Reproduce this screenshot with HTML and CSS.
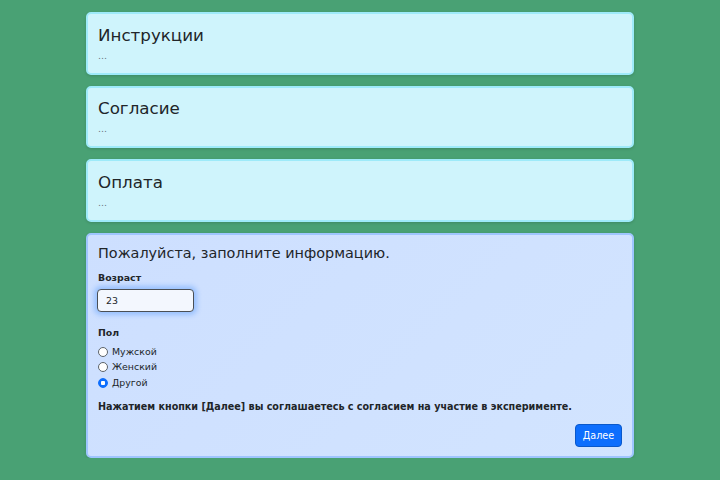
FILE: index.html
```html
<!DOCTYPE html>
<html lang="ru">
<head>
<meta charset="utf-8">
<title>Эксперимент</title>
<link rel="stylesheet" href="styles.css">
</head>
<body>
<main class="page">
  <section class="card card-info">
    <h2 class="card-title">Инструкции</h2>
    <p class="card-more">...</p>
  </section>
  <section class="card card-info">
    <h2 class="card-title">Согласие</h2>
    <p class="card-more">...</p>
  </section>
  <section class="card card-info">
    <h2 class="card-title">Оплата</h2>
    <p class="card-more">...</p>
  </section>
  <section class="card card-form">
    <h2 class="form-title">Пожалуйста, заполните информацию.</h2>
    <div class="field">
      <label class="field-label" for="age">Возраст</label>
      <input class="text-input" id="age" type="text" value="23">
    </div>
    <div class="field field-radios">
      <div class="field-label">Пол</div>
      <label class="radio-row"><input class="radio" type="radio" name="sex"> Мужской</label>
      <label class="radio-row"><input class="radio" type="radio" name="sex"> Женский</label>
      <label class="radio-row"><input class="radio" type="radio" name="sex" checked> Другой</label>
    </div>
    <p class="notice">Нажатием кнопки [Далее] вы соглашаетесь с согласием на участие в эксперименте.</p>
    <div class="actions">
      <button class="btn-primary" type="button">Далее</button>
    </div>
  </section>
</main>
</body>
</html>
```
FILE: styles.css
```css
* { box-sizing: border-box; }
html, body {
  margin: 0;
  padding: 0;
  background: #49a174;
  font-family: "DejaVu Sans", "Noto Sans", sans-serif;
  color: #212529;
}
.page {
  width: 548px;
  margin: 0 auto;
  padding-top: 12px;
  display: flex;
  flex-direction: column;
  gap: 11px;
}
.card {
  border: 2px solid #9eeaf9;
  border-radius: 5px;
  padding: 9.5px 10px 10px;
  box-shadow: 0 1px 3px rgba(0,0,0,0.15);
}
.card-info { background: #cff4fc; height: 62.5px; }
.card-title {
  margin: 0;
  font-size: 16.7px;
  font-weight: normal;
  line-height: 22px;
}
.card-more {
  margin: 2px 0 0;
  font-size: 9.5px;
  line-height: 16px;
  color: #6c757d;
}
.card-form {
  background: linear-gradient(135deg, #cddfff, #d2e4ff);
  border-color: #9ec5fe;
  padding: 9px 10px 9px;
}
.form-title {
  margin: 0 0 9.5px;
  font-size: 14.4px;
  font-weight: normal;
  line-height: 18px;
}
.field { display: flex; flex-direction: column; align-items: flex-start; margin-bottom: 14.5px; }
.field-radios { margin-bottom: 9.75px; }
.field-label {
  font-size: 9.4px;
  font-weight: bold;
  line-height: 13px;
  margin-bottom: 4.5px;
}
.field-radios .field-label { margin-bottom: 4.75px; }
.text-input {
  width: 97px;
  height: 23px;
  margin-left: -1px;
  border: 1px solid #4a4f55;
  border-radius: 4px;
  background: #f3f7fe;
  font-family: inherit;
  font-size: 9.4px;
  padding: 0 8px;
  color: #212529;
  box-shadow: 0 0 5px 3px rgba(13,110,253,0.28);
  outline: none;
}
.radio-row {
  display: flex;
  align-items: center;
  gap: 4px;
  font-size: 9.4px;
  line-height: 15.5px;
}
.radio {
  appearance: none;
  -webkit-appearance: none;
  margin: 0;
  width: 10px;
  height: 10px;
  border: 1px solid #5c636a;
  border-radius: 50%;
  background: #fff;
}
.radio:checked {
  border-color: #0d6efd;
  background: radial-gradient(circle, #fff 0 2px, #0d6efd 2.5px);
}
.notice {
  margin: 0 0 10.5px;
  font-size: 9.6px;
  font-weight: bold;
  line-height: 13px;
}
.actions { display: flex; justify-content: flex-end; }
.btn-primary {
  background: #0d6efd;
  color: #fff;
  border: 1px solid #0a58ca;
  border-radius: 4px;
  font-family: inherit;
  font-size: 9.6px;
  height: 23px;
  width: 47px;
  padding: 0;
}
```
